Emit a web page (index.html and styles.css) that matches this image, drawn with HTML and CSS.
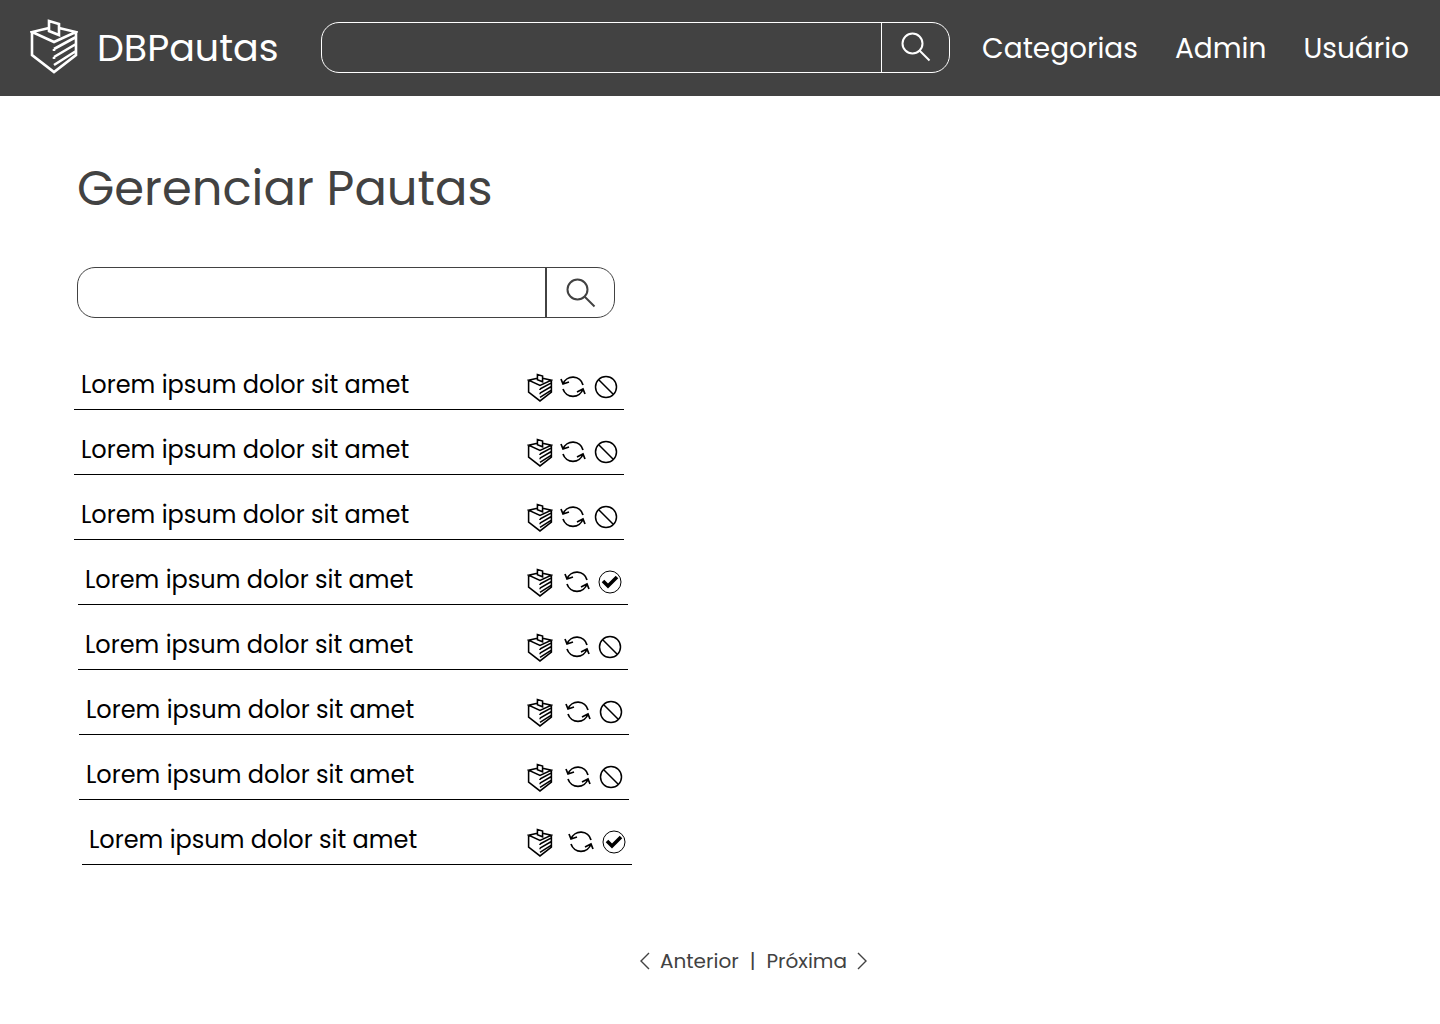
FILE: index.html
```html
<!DOCTYPE html>
<html lang="pt-BR">
<head>
<meta charset="utf-8">
<title>DBPautas</title>
<link rel="stylesheet" href="styles.css">
</head>
<body>
<svg class="sprite" aria-hidden="true">
  <symbol id="ballot" viewBox="0 0 48 56">
    <path d="M19 10 2 14l22 10 22-10-17-4M2 14v23l22 17 22-17V14M19 13V3l10 3v11zM46 19 24 31M46 26 24 39M46 33 24 47M24 31v2M24 39v2"/>
  </symbol>
  <symbol id="refresh" viewBox="0 0 26 24">
    <path d="M3 9A10.5 10.5 0 0 1 23 10M23 14A10.5 10.5 0 0 1 3 14M1 4l2 5 6-2M25 19l-2-5-6 3"/>
  </symbol>
  <symbol id="block" viewBox="0 0 24 24">
    <circle cx="12" cy="12" r="10.5"/><path d="m4.5 4.5 15 15"/>
  </symbol>
  <symbol id="check" viewBox="0 0 24 24">
    <circle cx="12" cy="12" r="11" stroke-width="1"/><path d="m5 11 5 5 9-9" stroke-width="3.6"/>
  </symbol>
  <symbol id="search" viewBox="0 0 30 30">
    <circle cx="11.5" cy="11.5" r="10"/><path d="m18.5 18.5 10 10"/>
  </symbol>
</svg>
<header class="topbar">
  <a class="brand" href="#"><svg class="brand-icon"><use href="#ballot"/></svg><span>DBPautas</span></a>
  <form class="search search-top">
    <input type="search" aria-label="Buscar">
    <button type="button" aria-label="Buscar"><svg><use href="#search"/></svg></button>
  </form>
  <nav class="menu"><a href="#">Categorias</a><a href="#">Admin</a><a href="#">Usuário</a></nav>
</header>
<main class="content">
  <h1>Gerenciar Pautas</h1>
  <form class="search search-list">
    <input type="search" aria-label="Buscar pauta">
    <button type="button" aria-label="Buscar pauta"><svg><use href="#search"/></svg></button>
  </form>
  <ul class="agenda">
    <li><span>Lorem ipsum dolor sit amet</span><button class="vote" aria-label="Votar"><svg><use href="#ballot"/></svg></button><button class="renew" aria-label="Atualizar"><svg><use href="#refresh"/></svg></button><button class="state" aria-label="Bloquear"><svg><use href="#block"/></svg></button></li>
    <li><span>Lorem ipsum dolor sit amet</span><button class="vote" aria-label="Votar"><svg><use href="#ballot"/></svg></button><button class="renew" aria-label="Atualizar"><svg><use href="#refresh"/></svg></button><button class="state" aria-label="Bloquear"><svg><use href="#block"/></svg></button></li>
    <li><span>Lorem ipsum dolor sit amet</span><button class="vote" aria-label="Votar"><svg><use href="#ballot"/></svg></button><button class="renew" aria-label="Atualizar"><svg><use href="#refresh"/></svg></button><button class="state" aria-label="Bloquear"><svg><use href="#block"/></svg></button></li>
    <li class="step-1"><span>Lorem ipsum dolor sit amet</span><button class="vote" aria-label="Votar"><svg><use href="#ballot"/></svg></button><button class="renew" aria-label="Atualizar"><svg><use href="#refresh"/></svg></button><button class="state" aria-label="Aprovar"><svg><use href="#check"/></svg></button></li>
    <li class="step-1"><span>Lorem ipsum dolor sit amet</span><button class="vote" aria-label="Votar"><svg><use href="#ballot"/></svg></button><button class="renew" aria-label="Atualizar"><svg><use href="#refresh"/></svg></button><button class="state" aria-label="Bloquear"><svg><use href="#block"/></svg></button></li>
    <li class="step-2"><span>Lorem ipsum dolor sit amet</span><button class="vote" aria-label="Votar"><svg><use href="#ballot"/></svg></button><button class="renew" aria-label="Atualizar"><svg><use href="#refresh"/></svg></button><button class="state" aria-label="Bloquear"><svg><use href="#block"/></svg></button></li>
    <li class="step-2"><span>Lorem ipsum dolor sit amet</span><button class="vote" aria-label="Votar"><svg><use href="#ballot"/></svg></button><button class="renew" aria-label="Atualizar"><svg><use href="#refresh"/></svg></button><button class="state" aria-label="Bloquear"><svg><use href="#block"/></svg></button></li>
    <li class="step-3"><span>Lorem ipsum dolor sit amet</span><button class="vote" aria-label="Votar"><svg><use href="#ballot"/></svg></button><button class="renew" aria-label="Atualizar"><svg><use href="#refresh"/></svg></button><button class="state" aria-label="Aprovar"><svg><use href="#check"/></svg></button></li>
  </ul>
</main>
<nav class="pager" aria-label="Paginação">
  <a href="#"><svg viewBox="0 0 12 18"><path d="M10 1 2 9l8 8"/></svg>Anterior</a>
  <span>|</span>
  <a href="#">Próxima<svg viewBox="0 0 12 18"><path d="m2 1 8 8-8 8"/></svg></a>
</nav>
</body>
</html>
```
FILE: styles.css
```css
* { box-sizing: border-box; }
body { margin: 0; background: #fff; color: #424242; font-family: Poppins, Inter, sans-serif; }
a { color: inherit; text-decoration: none; }
svg { display: block; fill: none; stroke: currentColor; stroke-width: 2; flex: none; }
button { padding: 0; border: 0; background: none; color: inherit; cursor: pointer; }
.sprite { position: absolute; width: 0; height: 0; }

.topbar { display: flex; align-items: center; height: 96px; padding: 0 31px 2px 30px; background: #424242; color: #fff; }
.brand { display: flex; align-items: center; gap: 19px; width: 291px; flex: none; font-size: 38px; }
.brand-icon { width: 48px; height: 56px; stroke-width: 2.6; margin-bottom: 2px; }
.menu { display: flex; gap: 37px; margin-left: 32px; padding-top: 4px; font-size: 28px; }

.search { display: flex; height: 51px; border: 1px solid currentColor; border-radius: 18px; }
.search input { flex: 1; min-width: 0; padding: 0 16px; border: 0; outline: 0; background: none; color: inherit; font: inherit; font-size: 20px; }
.search button { display: grid; place-items: center; width: 68px; border-left: 1px solid currentColor; }
.search svg { width: 30px; height: 30px; }
.search-top { flex: 1; }
.search-list { max-width: 538px; margin-left: 3px; }
.search-list button { border-left-width: 2px; width: 69px; }

.content { padding: 57px 74px 0; }
h1 { margin: 0 0 42px 3px; font-size: 48px; line-height: 72px; font-weight: 400; }
.agenda { margin: 27px 0 0; padding: 0; list-style: none; color: #000; }
.agenda li { --shift: 0px; display: grid; grid-template-columns: calc(453px - var(--shift)) 1fr 34px 30px; align-items: center; max-width: 550px; height: 65px; margin-left: var(--shift); padding-top: 14px; border-bottom: 1px solid #000; font-size: 24px; }
.agenda .step-1 { --shift: 4px; }
.agenda .step-2 { --shift: 5px; }
.agenda .step-3 { --shift: 8px; }
.agenda span { padding-left: 7px; white-space: nowrap; }
.agenda button { padding-top: 6px; }
.vote svg { width: 26px; height: 29px; stroke-width: 3; }
.renew svg { width: 26px; height: 24px; stroke-width: 1.7; }
.state svg { width: 24px; height: 24px; stroke-width: 1.5; }

.pager { display: flex; justify-content: center; align-items: center; gap: 11px; margin: 81px 0 32px; padding-left: 67px; font-size: 20px; line-height: 30px; }
.pager a { display: flex; align-items: center; gap: 9px; }
.pager svg { width: 12px; height: 18px; stroke-width: 1.4; }
```
